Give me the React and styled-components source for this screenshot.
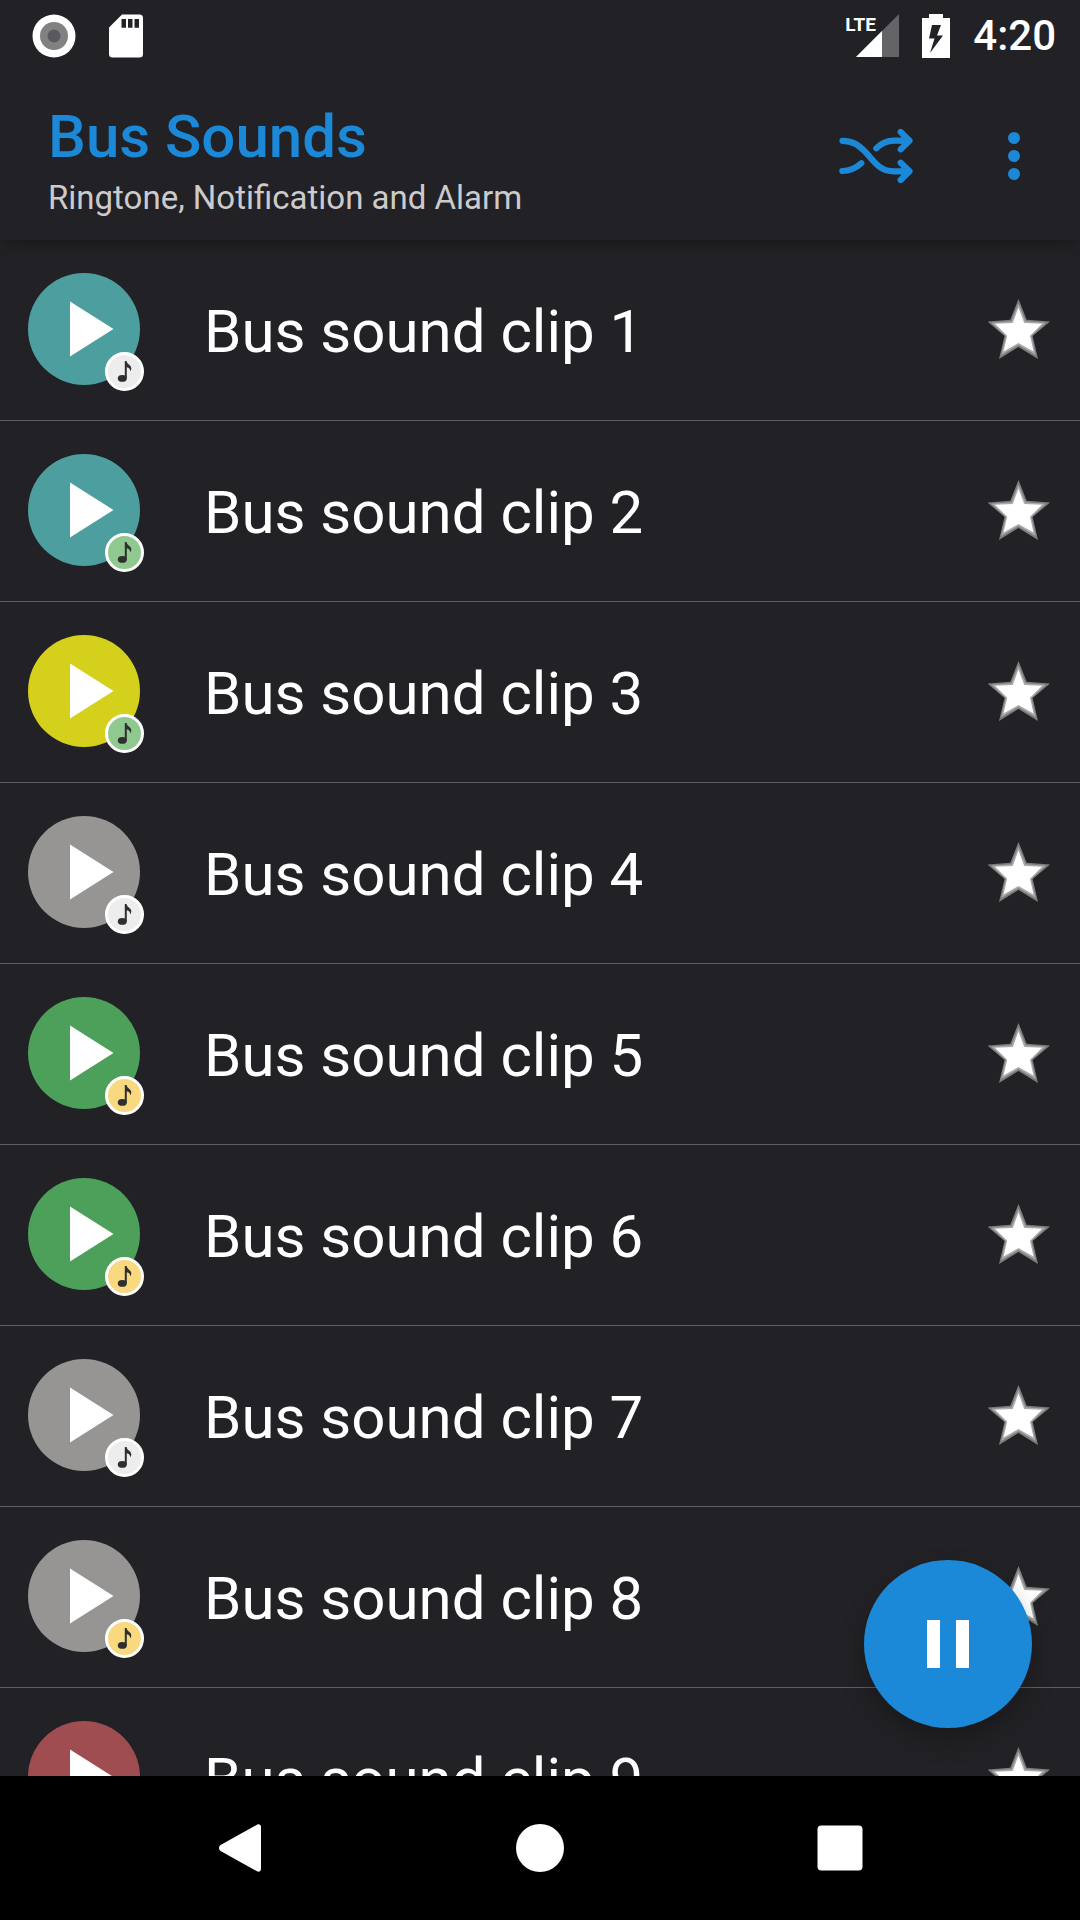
import React, { useState } from "react";
import styled, { createGlobalStyle } from "styled-components";

const colors = {
  background: "#222125",
  primary: "#1c89d8",
  white: "#ffffff",
  muted: "#cbcbcc",
  divider: "#5f5e62",
  teal: "#4d9e9f",
  yellow: "#d4d01c",
  gray: "#969593",
  green: "#4ca05a",
  red: "#9f4d50",
};

const badges = {
  plain: "#ededed",
  green: "#90c98f",
  amber: "#f9d97f",
};

const clips = [
  { id: 1, color: colors.teal, badge: badges.plain },
  { id: 2, color: colors.teal, badge: badges.green },
  { id: 3, color: colors.yellow, badge: badges.green },
  { id: 4, color: colors.gray, badge: badges.plain },
  { id: 5, color: colors.green, badge: badges.amber },
  { id: 6, color: colors.green, badge: badges.amber },
  { id: 7, color: colors.gray, badge: badges.plain },
  { id: 8, color: colors.gray, badge: badges.amber },
  { id: 9, color: colors.red, badge: badges.plain },
];

const GlobalStyle = createGlobalStyle`
  * {
    box-sizing: border-box;
    margin: 0;
    padding: 0;
  }
  body {
    background: ${colors.background};
    color: ${colors.white};
    font-family: Roboto, "Liberation Sans", sans-serif;
  }
  button {
    border: none;
    background: transparent;
    color: inherit;
    font: inherit;
    cursor: pointer;
  }
  svg {
    display: block;
  }
`;

const Screen = styled.div`
  display: flex;
  flex-direction: column;
  height: 100vh;
`;

const StatusBar = styled.div`
  display: flex;
  align-items: center;
  justify-content: space-between;
  height: 72px;
  padding: 0 24px 0 32px;
`;

const StatusGroup = styled.div`
  display: flex;
  align-items: center;
  gap: ${({ $gap }) => $gap};
`;

const Signal = styled.div`
  position: relative;
  padding-left: 11px;
`;

const NetworkType = styled.span`
  position: absolute;
  top: 0;
  left: 0;
  font-size: 19px;
  font-weight: 700;
  line-height: 22px;
`;

const Clock = styled.time`
  font-size: 42px;
  font-weight: 500;
  line-height: 48px;
`;

const Header = styled.header`
  position: relative;
  z-index: 1;
  display: flex;
  align-items: center;
  justify-content: space-between;
  padding: 0 36px 0 48px;
  background: ${colors.background};
  box-shadow: 0 8px 12px -4px rgba(0, 0, 0, 0.3);
`;

const Titles = styled.div`
  display: flex;
  flex-direction: column;
  gap: 4px;
  padding: 28px 0 22px;
`;

const Title = styled.h1`
  color: ${colors.primary};
  font-size: 60px;
  font-weight: 500;
  line-height: 74px;
`;

const Subtitle = styled.p`
  color: ${colors.muted};
  font-size: 33px;
  line-height: 40px;
`;

const Actions = styled.div`
  display: flex;
  align-items: center;
  gap: 66px;
`;

const IconButton = styled.button`
  display: flex;
  align-items: center;
  justify-content: center;
  width: ${({ $width }) => $width};
  height: 60px;
  color: ${colors.primary};
`;

const Content = styled.main`
  position: relative;
  flex: 1;
  min-height: 0;
`;

const ClipList = styled.ul`
  height: 100%;
  overflow-y: auto;
  list-style: none;
  scrollbar-width: none;
`;

const ClipRow = styled.li`
  display: flex;
  align-items: flex-start;
  padding: 33px 28px 29px;
  border-bottom: 1px solid ${colors.divider};
`;

const PlayButton = styled.button`
  position: relative;
  flex: none;
  width: 112px;
  height: 112px;
  border-radius: 50%;
  background: ${({ $color }) => $color};
`;

const Badge = styled.span`
  position: absolute;
  right: -4px;
  bottom: -6px;
  width: 39px;
  height: 39px;
  border: 3px solid ${colors.white};
  border-radius: 50%;
  background: ${({ $color }) => $color};
`;

const ClipName = styled.span`
  flex: 1;
  padding-left: 64px;
  font-size: 60px;
  line-height: 118px;
`;

const StarButton = styled.button`
  display: flex;
  align-items: center;
  height: 118px;
`;

const PauseButton = styled.button`
  position: absolute;
  right: 48px;
  bottom: 48px;
  display: flex;
  align-items: center;
  justify-content: center;
  gap: 16px;
  width: 168px;
  height: 168px;
  border-radius: 50%;
  background: ${colors.primary};
  box-shadow: 0 12px 24px rgba(0, 0, 0, 0.25);
`;

const PauseBar = styled.span`
  width: 13px;
  height: 48px;
  background: ${colors.white};
`;

const NavBar = styled.nav`
  display: flex;
  justify-content: space-around;
  padding: 0 90px;
  background: #000000;
`;

const NavButton = styled.button`
  display: flex;
  align-items: center;
  justify-content: center;
  width: 144px;
  height: 144px;
`;

const CameraIcon = () => (
  <svg width="44" height="44" viewBox="0 0 44 44" aria-hidden="true">
    <circle cx="22" cy="22" r="21.5" fill="#fff" />
    <circle cx="22" cy="22" r="14" fill="#818181" />
    <circle cx="22" cy="22" r="6.5" fill="#5a595d" />
  </svg>
);

const SdCardIcon = () => (
  <svg width="36" height="44" viewBox="0 0 36 44" aria-hidden="true">
    <path
      fill="#fff"
      fillRule="evenodd"
      d="M14 .5H31.500a3.500 3.500 0 0 1 3.500 3.500V40a3.500 3.500 0 0 1-3.500 3.500H4.500A3.500 3.500 0 0 1 1 40V13.500ZM13.500 5V13.700H18V5ZM20 5V13.700H24.500V5ZM26.500 5V13.700H31V5Z"
    />
  </svg>
);

const SignalIcon = () => (
  <svg width="43" height="44" viewBox="0 0 43 44" aria-hidden="true">
    <path fill="#646367" d="M43 0V43H0Z" />
    <path fill="#fff" d="M26 17V43H0Z" />
  </svg>
);

const BatteryIcon = () => (
  <svg width="28" height="44" viewBox="0 0 28 44" aria-hidden="true">
    <path
      fill="#fff"
      fillRule="evenodd"
      d="M7 0H21V4H28V44H0V4H7ZM10 11L7 24.500H12.500L8 39L21 21.500H15L19 11Z"
    />
  </svg>
);

const ShuffleIcon = () => (
  <svg
    width="84"
    height="60"
    viewBox="0 0 84 60"
    fill="none"
    stroke="currentColor"
    strokeWidth="6.200"
    strokeLinecap="round"
    strokeLinejoin="round"
    aria-hidden="true"
  >
    <path d="M8.500 14.800C19 14.800 25 19 32.700 27.300C41 36.500 46 45.300 60 45.300H75" />
    <path d="M8.300 45C16 45 22 42 27.300 37.200" />
    <path d="M42.300 22.300C47 17.500 52 14.600 60 14.600H75" />
    <path d="M66.700 6L75.500 14.700L66.700 23.400M73 14.700H68" />
    <path d="M66.700 36.700L75.500 45.300L66.700 54M73 45.300H68" />
  </svg>
);

const MoreIcon = () => (
  <svg width="12" height="48" viewBox="0 0 12 48" fill="currentColor" aria-hidden="true">
    <circle cx="6" cy="6" r="6" />
    <circle cx="6" cy="24" r="6" />
    <circle cx="6" cy="42" r="6" />
  </svg>
);

const PlayIcon = () => (
  <svg width="112" height="112" viewBox="0 0 112 112" aria-hidden="true">
    <path fill="#fff" d="M42 28.500L85.500 56L42 83.500Z" />
  </svg>
);

const NoteIcon = () => (
  <svg width="33" height="33" viewBox="3 3 33 33" fill="#2f2f2f" aria-hidden="true">
    <ellipse cx="17.300" cy="26.400" rx="4.500" ry="3.400" />
    <path d="M19.800 9H21.600C22 12.500 26.400 13 26.300 16.500C26.300 17.500 25.800 18.500 25.200 19.300C25.200 16.800 24 15.600 21.800 15.200V26.400H19.800Z" />
  </svg>
);

const StarIcon = () => (
  <svg width="64" height="66" viewBox="0 0 64 66" aria-hidden="true">
    <path
      fill="#7d7d7e"
      d="M30.500 0L38.700 20.700L62 22.500L44.700 37L50 60L30.500 48L11 60L16.500 37L-.5 22.500L22.300 20.700Z"
    />
    <path
      fill="#aaaaaa"
      d="M30.500 4.500L37.500 22.300L57.500 23.700L43.300 37L47.700 56L30.500 46L13.300 56L17.800 37L3.500 23.700L23.500 22.300Z"
    />
    <path
      fill="#fff"
      d="M30.500 8.500L36.200 24L54 24.800L42 36.700L45.500 52.500L30.500 44L15.500 52.500L19.200 36.700L7 24.800L24.800 24Z"
    />
  </svg>
);

const BackIcon = () => (
  <svg width="48" height="48" viewBox="0 0 48 48" aria-hidden="true">
    <path
      fill="#fff"
      d="M4.500 21L41 .8C43 -.3 45 .8 45 3V45C45 47.200 43 48.300 41 47.200L4.500 27C2.500 25.500 2.500 22.500 4.500 21Z"
    />
  </svg>
);

const HomeIcon = () => (
  <svg width="48" height="48" viewBox="0 0 48 48" aria-hidden="true">
    <circle cx="24" cy="24" r="24" fill="#fff" />
  </svg>
);

const RecentIcon = () => (
  <svg width="48" height="48" viewBox="0 0 48 48" aria-hidden="true">
    <rect x="1.500" y="1.500" width="45" height="45" rx="4" fill="#fff" />
  </svg>
);

const App = () => {
  const [favorites, setFavorites] = useState([]);

  const toggleFavorite = (id) => {
    setFavorites((prev) =>
      prev.includes(id) ? prev.filter((item) => item !== id) : [...prev, id]
    );
  };

  return (
    <Screen>
      <GlobalStyle />
      <StatusBar>
        <StatusGroup $gap="32px">
          <CameraIcon />
          <SdCardIcon />
        </StatusGroup>
        <StatusGroup $gap="23px">
          <Signal>
            <NetworkType>LTE</NetworkType>
            <SignalIcon />
          </Signal>
          <BatteryIcon />
          <Clock>4:20</Clock>
        </StatusGroup>
      </StatusBar>
      <Header>
        <Titles>
          <Title>Bus Sounds</Title>
          <Subtitle>Ringtone, Notification and Alarm</Subtitle>
        </Titles>
        <Actions>
          <IconButton $width="84px" aria-label="Shuffle">
            <ShuffleIcon />
          </IconButton>
          <IconButton $width="60px" aria-label="More options">
            <MoreIcon />
          </IconButton>
        </Actions>
      </Header>
      <Content>
        <ClipList>
          {clips.map((clip) => {
            const { id, color, badge } = clip;
            const name = `Bus sound clip ${id}`;
            return (
              <ClipRow key={id}>
                <PlayButton $color={color} aria-label={`Play ${name}`}>
                  <PlayIcon />
                  <Badge $color={badge}>
                    <NoteIcon />
                  </Badge>
                </PlayButton>
                <ClipName>{name}</ClipName>
                <StarButton
                  aria-label={`Favorite ${name}`}
                  aria-pressed={favorites.includes(id)}
                  onClick={() => toggleFavorite(id)}
                >
                  <StarIcon />
                </StarButton>
              </ClipRow>
            );
          })}
        </ClipList>
        <PauseButton aria-label="Pause">
          <PauseBar />
          <PauseBar />
        </PauseButton>
      </Content>
      <NavBar>
        <NavButton aria-label="Back">
          <BackIcon />
        </NavButton>
        <NavButton aria-label="Home">
          <HomeIcon />
        </NavButton>
        <NavButton aria-label="Recent apps">
          <RecentIcon />
        </NavButton>
      </NavBar>
    </Screen>
  );
};

export default App;
